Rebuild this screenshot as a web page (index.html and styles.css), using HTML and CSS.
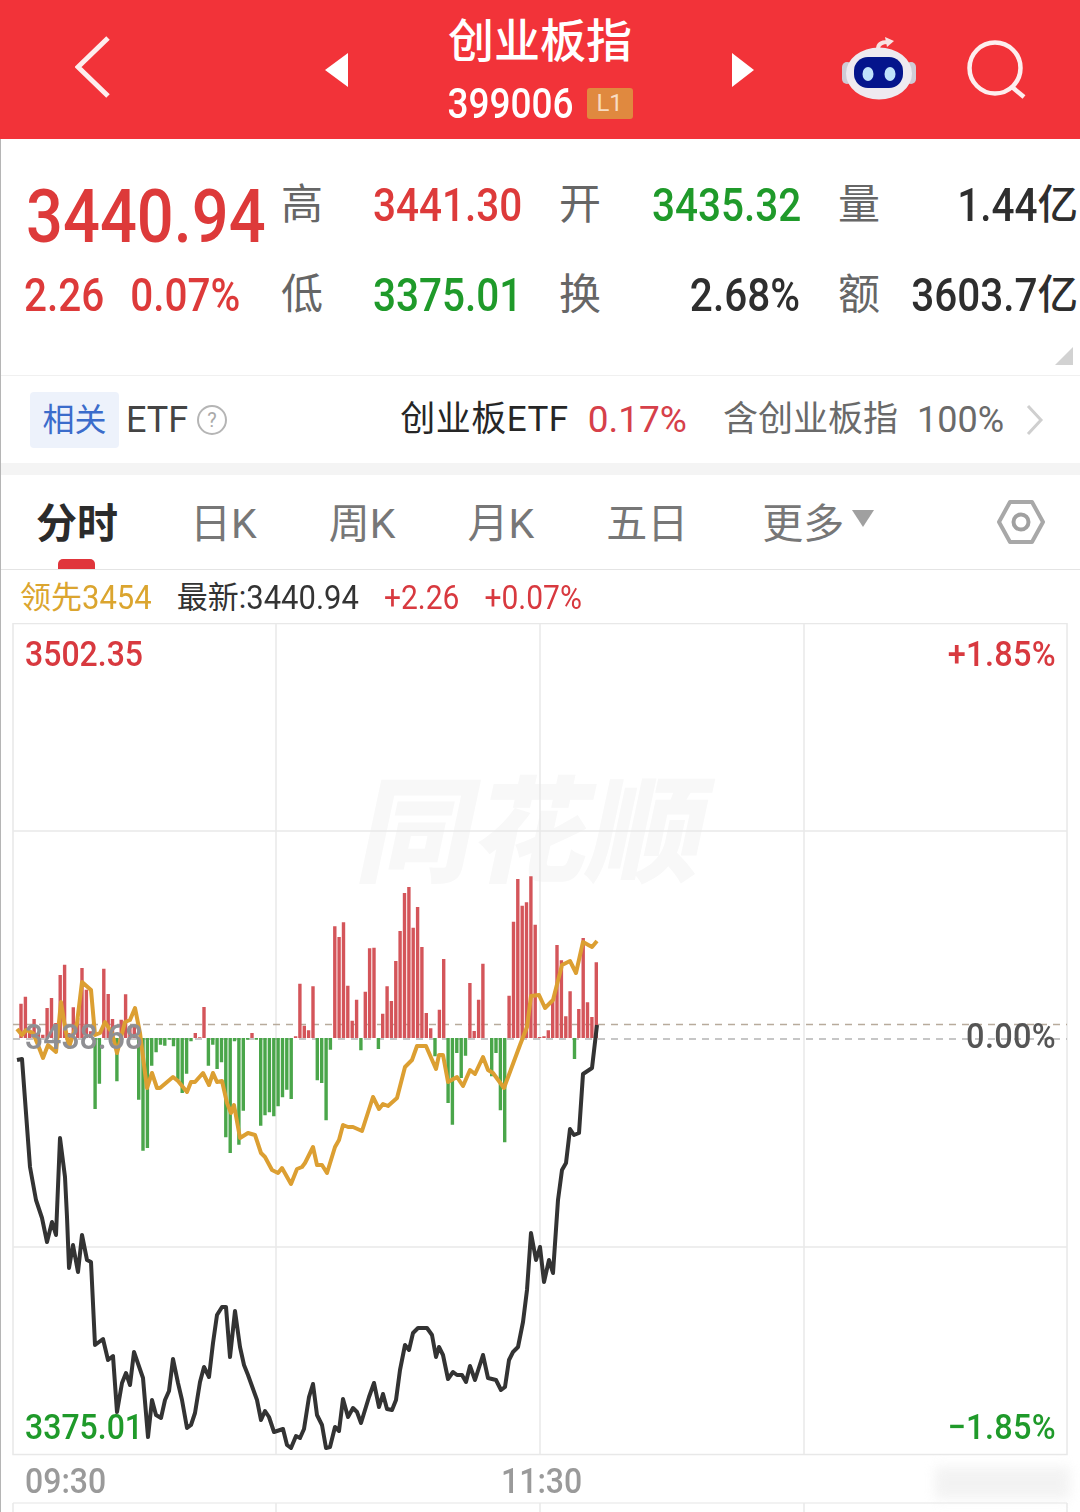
FILE: index.html
```html
<!DOCTYPE html>
<html lang="zh">
<head>
    <meta charset="utf-8">
    <title>创业板指 399006</title>
    <link rel="stylesheet" href="styles.css">
</head>
<body>
    <header class="topbar">
        <div class="back-cell">
            <svg width="36" height="64" viewBox="0 0 36 64"><path d="M33 3 L3 32 L33 61" class="back-icon"/></svg>
        </div>
        <div class="tri tri-left"></div>
        <div class="title-box">
            <div class="title">创业板指</div>
            <div class="code-row">
                <span class="num code">399006</span>
                <span class="level">L1</span>
            </div>
        </div>
        <div class="tri tri-right"></div>
        <div class="top-actions">
            <svg width="76" height="66" viewBox="0 0 76 66">
                <path d="M37 12 C37 6 42 5 47 5" class="antenna"/>
                <path d="M44 0 L53 4 L46 10 Z" fill="#f7e3e3"/>
                <rect x="1" y="25" width="10" height="22" rx="5" fill="#cfccd6"/>
                <rect x="65" y="25" width="10" height="22" rx="5" fill="#cfccd6"/>
                <ellipse cx="38" cy="36.5" rx="33" ry="26" fill="#eeeaf0"/>
                <rect x="13" y="20" width="49" height="31" rx="14" fill="#04148c"/>
                <ellipse cx="27" cy="37" rx="5.5" ry="7" fill="#bfe2fb"/>
                <ellipse cx="49" cy="37" rx="5.5" ry="7" fill="#bfe2fb"/>
            </svg>
            <svg width="60" height="60" viewBox="0 0 60 60">
                <circle cx="28" cy="28" r="25.5" class="search-icon"/>
                <path d="M45 47 L57 57" class="search-icon"/>
            </svg>
        </div>
    </header>

    <main class="content">
        <section class="quote">
            <div class="price-cell"><span class="num price red">3440.94</span></div>
            <div class="lab">高</div>
            <div class="val red"><span class="num">3441.30</span></div>
            <div class="lab">开</div>
            <div class="val green"><span class="num">3435.32</span></div>
            <div class="lab">量</div>
            <div class="val val-last dark"><span class="num">1.44</span>亿</div>

            <div class="change-cell red"><span class="num">2.26</span><span class="num">0.07%</span></div>
            <div class="lab">低</div>
            <div class="val green"><span class="num">3375.01</span></div>
            <div class="lab">换</div>
            <div class="val dark"><span class="num">2.68%</span></div>
            <div class="lab">额</div>
            <div class="val val-last dark"><span class="num">3603.7</span>亿</div>
            <div class="corner"></div>
        </section>

        <section class="etf-row">
            <span class="etf-tag">相关</span>
            <span class="etf-word">ETF</span>
            <svg class="help" width="32" height="32" viewBox="0 0 32 32">
                <circle cx="16" cy="16" r="14" fill="none" stroke="#b5b5b5" stroke-width="2"/>
                <text x="16" y="23" text-anchor="middle" class="help-mark">?</text>
            </svg>
            <span class="etf-name">创业板ETF</span>
            <span class="etf-pct">0.17%</span>
            <span class="etf-hold">含创业板指</span>
            <span class="etf-ratio">100%</span>
            <svg class="etf-more" width="19" height="32" viewBox="0 0 19 32"><path d="M3 2 L16 16 L3 30" fill="none" stroke="#cfcfcf" stroke-width="3"/></svg>
        </section>

        <div class="divider"></div>

        <nav class="tabs">
            <span class="tab tab-active">分时</span>
            <span class="tab">日K</span>
            <span class="tab">周K</span>
            <span class="tab">月K</span>
            <span class="tab">五日</span>
            <span class="tab tab-more">更多</span>
            <span class="tab-caret"></span>
            <svg class="hex" width="48" height="46" viewBox="0 0 48 46">
                <path d="M13 3 H35 L46 23 L35 43 H13 L2 23 Z" fill="none" stroke="#a8a8a8" stroke-width="4" stroke-linejoin="round"/>
                <circle cx="24" cy="23" r="7.5" fill="none" stroke="#a0a0a0" stroke-width="4"/>
            </svg>
        </nav>

        <div class="info-row">
            <span class="lead">领先<span class="num-sm">3454</span></span>
            <span class="latest">最新:<span class="num-sm">3440.94</span></span>
            <span class="info-change"><span class="num-sm">+2.26</span></span>
            <span class="info-change"><span class="num-sm">+0.07%</span></span>
        </div>

        <div class="chart">
            <div class="mark">同花顺</div>
            <svg id="chartSvg" class="chart-svg" width="1080" height="889" viewBox="0 623 1080 889"></svg>
            <span class="axis-label top-left red-soft">3502.35</span>
            <span class="axis-label axis-pct top-right red-soft">+1.85%</span>
            <span class="axis-label mid-left">3438.68</span>
            <span class="axis-label axis-pct mid-right">0.00%</span>
            <span class="axis-label low-left green">3375.01</span>
            <span class="axis-label axis-pct low-right green">−1.85%</span>
            <span class="axis-label time-open">09:30</span>
            <span class="axis-label time-noon">11:30</span>
            <div class="smudge"></div>
        </div>
    </main>
    <script src="chart.js"></script>
</body>
</html>
```

FILE: styles.css
```css
* {
    box-sizing: border-box;
}
body {
    margin: 0;
    width: 1080px;
    height: 1512px;
    overflow: hidden;
    background-color: #fff;
    font-family: Roboto, "Noto Sans CJK SC", sans-serif;
    color: #333;
}
.red {
    color: #dd3a3a;
}
.red-soft {
    color: #d8393f;
}
.green {
    color: #1f9a2a;
}
.dark {
    color: #2e2e2e;
}
.num {
    display: inline-block;
    transform: scaleY(1.14);
}
.num-sm {
    display: inline-block;
    transform: scaleY(1.1);
}

/* top bar */
.topbar {
    height: 139px;
    background-color: #f23339;
    display: grid;
    grid-template-columns: 325px 23px 1fr 22px 326px;
    align-items: center;
    color: #fff;
}
.back-cell {
    padding-left: 75px;
    padding-bottom: 6px;
    display: flex;
}
.back-icon {
    fill: none;
    stroke: #fdeeee;
    stroke-width: 5;
}
.tri {
    width: 0;
    height: 0;
    border-top: 17px solid transparent;
    border-bottom: 17px solid transparent;
}
.tri-left {
    border-right: 23px solid #fff;
}
.tri-right {
    border-left: 22px solid #fff;
}
.title-box {
    display: flex;
    flex-direction: column;
    align-items: center;
    gap: 20px;
    padding-bottom: 2px;
}
.title {
    font-size: 46px;
    line-height: 50px;
    font-weight: 500;
}
.code-row {
    display: flex;
    align-items: center;
    gap: 13px;
    height: 36px;
}
.code {
    font-size: 37px;
    line-height: 36px;
    font-weight: 500;
}
.level {
    width: 46px;
    height: 31px;
    background-color: #e0893f;
    border-radius: 3px;
    color: #f8dcc2;
    font-size: 24px;
    line-height: 31px;
    text-align: center;
}
.top-actions {
    display: flex;
    align-items: center;
    padding-left: 87px;
    gap: 50px;
}
.antenna {
    fill: none;
    stroke: #f7e3e3;
    stroke-width: 4;
}
.search-icon {
    fill: none;
    stroke: #fdeeee;
    stroke-width: 4.5;
}

/* content column */
.content {
    position: relative;
}
.content::before {
    content: "";
    position: absolute;
    left: 0;
    top: 0;
    bottom: 0;
    width: 1px;
    background-color: #b5b5b5;
    z-index: 2;
}

/* quote panel */
.quote {
    position: relative;
    height: 236px;
    padding-top: 21px;
    display: grid;
    grid-template-columns: 281px 92px 186px 93px 186px 71px 170px;
    grid-template-rows: 90px 90px;
    align-items: center;
    font-weight: 500;
}
.price-cell {
    padding-left: 26px;
    padding-top: 24px;
    white-space: nowrap;
}
.price {
    font-size: 65px;
    line-height: 60px;
}
.change-cell {
    padding-left: 24px;
    font-size: 40.5px;
    display: flex;
    gap: 26px;
}
.lab {
    font-size: 42px;
    font-weight: 400;
    color: #666;
    line-height: 48px;
}
.val {
    font-size: 40.5px;
    text-align: right;
    padding-right: 38px;
    line-height: 48px;
    white-space: nowrap;
}
.val-last {
    padding-right: 1px;
}
.corner {
    position: absolute;
    left: 1055px;
    top: 208px;
    width: 18px;
    height: 18px;
    background-color: #d2d2d2;
    clip-path: polygon(100% 0, 100% 100%, 0 100%);
}

/* ETF row */
.etf-row {
    height: 88px;
    border-top: 1px solid #f0f0f0;
    padding-left: 30px;
    display: flex;
    align-items: center;
    font-size: 35px;
    line-height: 44px;
}
.etf-tag {
    width: 89px;
    height: 56px;
    background-color: #edf2fb;
    border-radius: 4px;
    color: #3b6ccb;
    font-size: 32px;
    line-height: 56px;
    text-align: center;
}
.etf-word {
    margin-left: 7px;
    font-size: 36px;
    color: #444;
}
.help {
    margin-left: 8px;
}
.help-mark {
    font-size: 20px;
    fill: #aaa;
}
.etf-name {
    margin-left: 172px;
    color: #262626;
    letter-spacing: 0.5px;
}
.etf-pct {
    margin-left: 19px;
    font-size: 37px;
    color: #d6404a;
}
.etf-hold {
    margin-left: 36px;
    color: #6a6a6a;
}
.etf-ratio {
    margin-left: 19px;
    font-size: 36px;
    color: #6a6a6a;
}
.etf-more {
    margin-left: 21px;
}
.divider {
    height: 12px;
    background-color: #f4f4f4;
}

/* period tabs */
.tabs {
    position: relative;
    height: 95px;
    border-bottom: 1px solid #e4e4e4;
    padding-left: 36px;
    padding-bottom: 4px;
    display: flex;
    align-items: center;
    gap: 72px;
    font-size: 41px;
    color: #777;
}
.tab-active {
    color: #2b2b2b;
    font-weight: 700;
}
.tab-active::after {
    content: "";
    position: absolute;
    left: 58px;
    bottom: 0;
    width: 37px;
    height: 10px;
    border-radius: 5px 5px 0 0;
    background-color: #e0353b;
}
.tab-more {
    margin-left: 2px;
}
.tab-caret {
    width: 0;
    height: 0;
    margin-left: -64px;
    margin-top: -4px;
    border-left: 11px solid transparent;
    border-right: 11px solid transparent;
    border-top: 17px solid #a0a0a0;
}
.hex {
    position: absolute;
    left: 997px;
    top: 24px;
}

/* latest line */
.info-row {
    height: 53px;
    padding-left: 20px;
    padding-top: 3px;
    display: flex;
    align-items: center;
    gap: 25px;
    font-size: 31px;
    line-height: 40px;
    white-space: nowrap;
}
.lead {
    color: #dba52f;
}
.latest {
    color: #333;
}
.info-change {
    font-size: 30px;
    color: #d8393f;
}

/* chart */
.chart {
    position: relative;
    height: 889px;
    overflow: hidden;
}
.chart-svg {
    position: absolute;
    left: 0;
    top: 0;
}
.mark {
    position: absolute;
    left: 362px;
    top: 146px;
    font-size: 115px;
    line-height: 130px;
    font-weight: 900;
    color: #f8f8f8;
    transform: skewX(-12deg);
    white-space: nowrap;
}
.axis-label {
    position: absolute;
    font-size: 32px;
    line-height: 40px;
    font-weight: 500;
    transform: scaleY(1.1);
    white-space: nowrap;
}
.axis-pct {
    font-size: 32.5px;
    letter-spacing: 0.3px;
}
.top-left {
    left: 25px;
    top: 11px;
}
.top-right {
    right: 24px;
    top: 11px;
}
.mid-left {
    left: 25px;
    top: 394px;
    color: #8f8f93;
}
.mid-right {
    right: 24px;
    top: 393px;
    color: #555;
}
.low-left {
    left: 25px;
    top: 784px;
}
.low-right {
    right: 24px;
    top: 784px;
}
.time-open {
    left: 25px;
    top: 838px;
    color: #9a9a9a;
}
.time-noon {
    left: 501px;
    top: 838px;
    color: #9a9a9a;
}
.smudge {
    position: absolute;
    left: 935px;
    top: 844px;
    width: 135px;
    height: 32px;
    background-color: #e9e9e9;
    filter: blur(6px);
    opacity: 0.55;
}
```

FILE: chart.js
```js
// heights of the volume bars, in thirds of a pixel (negative goes down)
const bars = [103, 124, 25, 57, 15, 10, 90, 120, 45, 189, 220, 15, 92, 60, 210, 145, 20, -213, -137, 208,
    132, 57, -130, 55, 131, 35, 35, -185, -338, -330, -83, -43, -20, -23, -5, -25, -125, -165, -107, -10,
    15, 2, 93, -83, -20, -93, -73, -298, -345, -10, -320, -218, -5, 15, -5, -263, -232, -223, -235, -205,
    -178, -155, -183, 5, 163, 37, 23, 155, -127, -135, -247, -35, 335, 303, 347, 157, 52, 115, -37, 139,
    269, 271, -33, 73, 155, 111, 231, 321, 435, 453, 331, 393, 273, 75, 29, -55, 85, 237, -195, -260,
    -45, -120, -53, 165, 21, 115, 223, 0, -115, -45, -217, -313, 127, 349, 477, 397, 407, 485, 340, 3,
    5, 23, 115, 279, 233, 65, 140, -63, 87, 300, 107, 63, 227];

const priceLine = '17,1060 22,1059 30,1167 36,1200 42,1218 47,1242 52,1222 56,1235 60,1138 65,1177 67,1217 69,1268 ' +
    '73,1245 78,1272 82,1235 87,1260 91,1262 95,1345 103,1339 108,1360 113,1356 117,1412 122,1383 126,1373 ' +
    '130,1385 134,1352 143,1378 148,1437 152,1400 156,1415 161,1418 165,1400 169,1391 173,1359 178,1383 ' +
    '182,1400 187,1428 191,1425 195,1413 200,1382 204,1367 209,1377 213,1343 217,1315 222,1307 226,1307 ' +
    '230,1357 235,1311 240,1347 244,1365 248,1375 257,1400 261,1420 265,1411 269,1417 274,1432 283,1429 ' +
    '287,1445 291,1448 296,1436 300,1438 304,1429 309,1397 313,1384 317,1415 322,1425 326,1448 330,1447 ' +
    '335,1427 339,1431 343,1399 348,1417 353,1408 357,1412 361,1423 369,1397 374,1383 379,1407 383,1394 ' +
    '387,1409 392,1410 396,1400 400,1370 405,1345 409,1350 413,1333 418,1328 427,1328 432,1335 436,1357 ' +
    '439,1347 443,1355 448,1379 453,1372 457,1375 462,1375 466,1382 470,1366 475,1380 483,1355 488,1378 ' +
    '496,1380 501,1390 505,1387 509,1360 513,1352 518,1347 523,1322 527,1290 531,1233 536,1260 540,1247 ' +
    '544,1282 549,1260 553,1273 558,1200 562,1170 566,1163 570,1129 574,1135 579,1133 583,1074 592,1068 597,1025';

const leadLine = '17,1029 22,1035 26,1030 33,1033 38,1045 43,1058 48,1045 56,1052 61,1002 65,1027 69,1047 77,1023 ' +
    '82,982 91,990 95,1035 100,1033 105,1022 112,1033 117,1053 125,1022 130,1020 135,1008 140,1033 143,1057 ' +
    '147,1088 152,1073 157,1088 160,1088 173,1077 178,1081 187,1092 191,1082 195,1082 203,1073 209,1085 ' +
    '213,1073 217,1082 222,1081 227,1103 231,1113 234,1105 240,1138 248,1133 255,1135 261,1153 265,1157 ' +
    '272,1170 278,1173 282,1168 291,1184 297,1169 302,1167 305,1163 313,1147 317,1165 322,1165 327,1173 ' +
    '335,1147 339,1140 343,1125 348,1127 353,1127 362,1131 373,1097 379,1109 383,1104 388,1106 397,1098 ' +
    '405,1067 412,1060 417,1046 426,1046 436,1069 439,1055 443,1055 448,1082 457,1077 463,1086 470,1070 ' +
    '475,1074 483,1057 488,1070 493,1073 504,1088 520,1045 527,1027 531,996 539,995 545,1008 553,1000 ' +
    '562,965 570,961 576,973 583,942 592,947 597,941';

const svg = document.getElementById('chartSvg');
const NS = 'http://www.w3.org/2000/svg';

function add(tag, attrs) {
    const el = document.createElementNS(NS, tag);
    for (const key in attrs) {
        el.setAttribute(key, attrs[key]);
    }
    svg.appendChild(el);
}

// grid
const gridColor = '#e8e8e8';
add('rect', { x: 13, y: 623.5, width: 1054, height: 831, fill: 'none', stroke: gridColor, 'stroke-width': 1.5 });
[276, 540, 804].forEach(x => add('path', { d: `M${x} 623V1455`, stroke: gridColor, 'stroke-width': 1.5 }));
[831, 1247].forEach(y => add('path', { d: `M13 ${y}H1067`, stroke: gridColor, 'stroke-width': 1.5 }));
add('path', { d: 'M13 1503H1067', stroke: '#eeeeee', 'stroke-width': 1.5 });
[13, 276, 540, 804, 1067].forEach(x => add('path', { d: `M${x} 1503V1512`, stroke: gridColor, 'stroke-width': 1.5 }));

// reference levels
add('path', { d: 'M13 1024.5H1067', stroke: '#b8ab9c', 'stroke-width': 1.5, 'stroke-dasharray': '7 6' });
add('path', { d: 'M13 1039H1067', stroke: '#b4b4b4', 'stroke-width': 1.5, 'stroke-dasharray': '7 6' });

// volume bars
let up = '';
let down = '';
bars.forEach((h, i) => {
    const x = (21 + i * 4.358).toFixed(1);
    const seg = `M${x} 1038V${(1038 - h / 3).toFixed(1)}`;
    if (h >= 0) {
        up += seg;
    } else {
        down += seg;
    }
});
add('path', { d: up, stroke: '#d4555a', 'stroke-width': 3.4, fill: 'none' });
add('path', { d: down, stroke: '#4aa64a', 'stroke-width': 3.4, fill: 'none' });

// lines
add('polyline', { points: leadLine, stroke: '#dc9f32', 'stroke-width': 4, fill: 'none', 'stroke-linejoin': 'round' });
add('polyline', { points: priceLine, stroke: '#333333', 'stroke-width': 4, fill: 'none', 'stroke-linejoin': 'round' });
```
